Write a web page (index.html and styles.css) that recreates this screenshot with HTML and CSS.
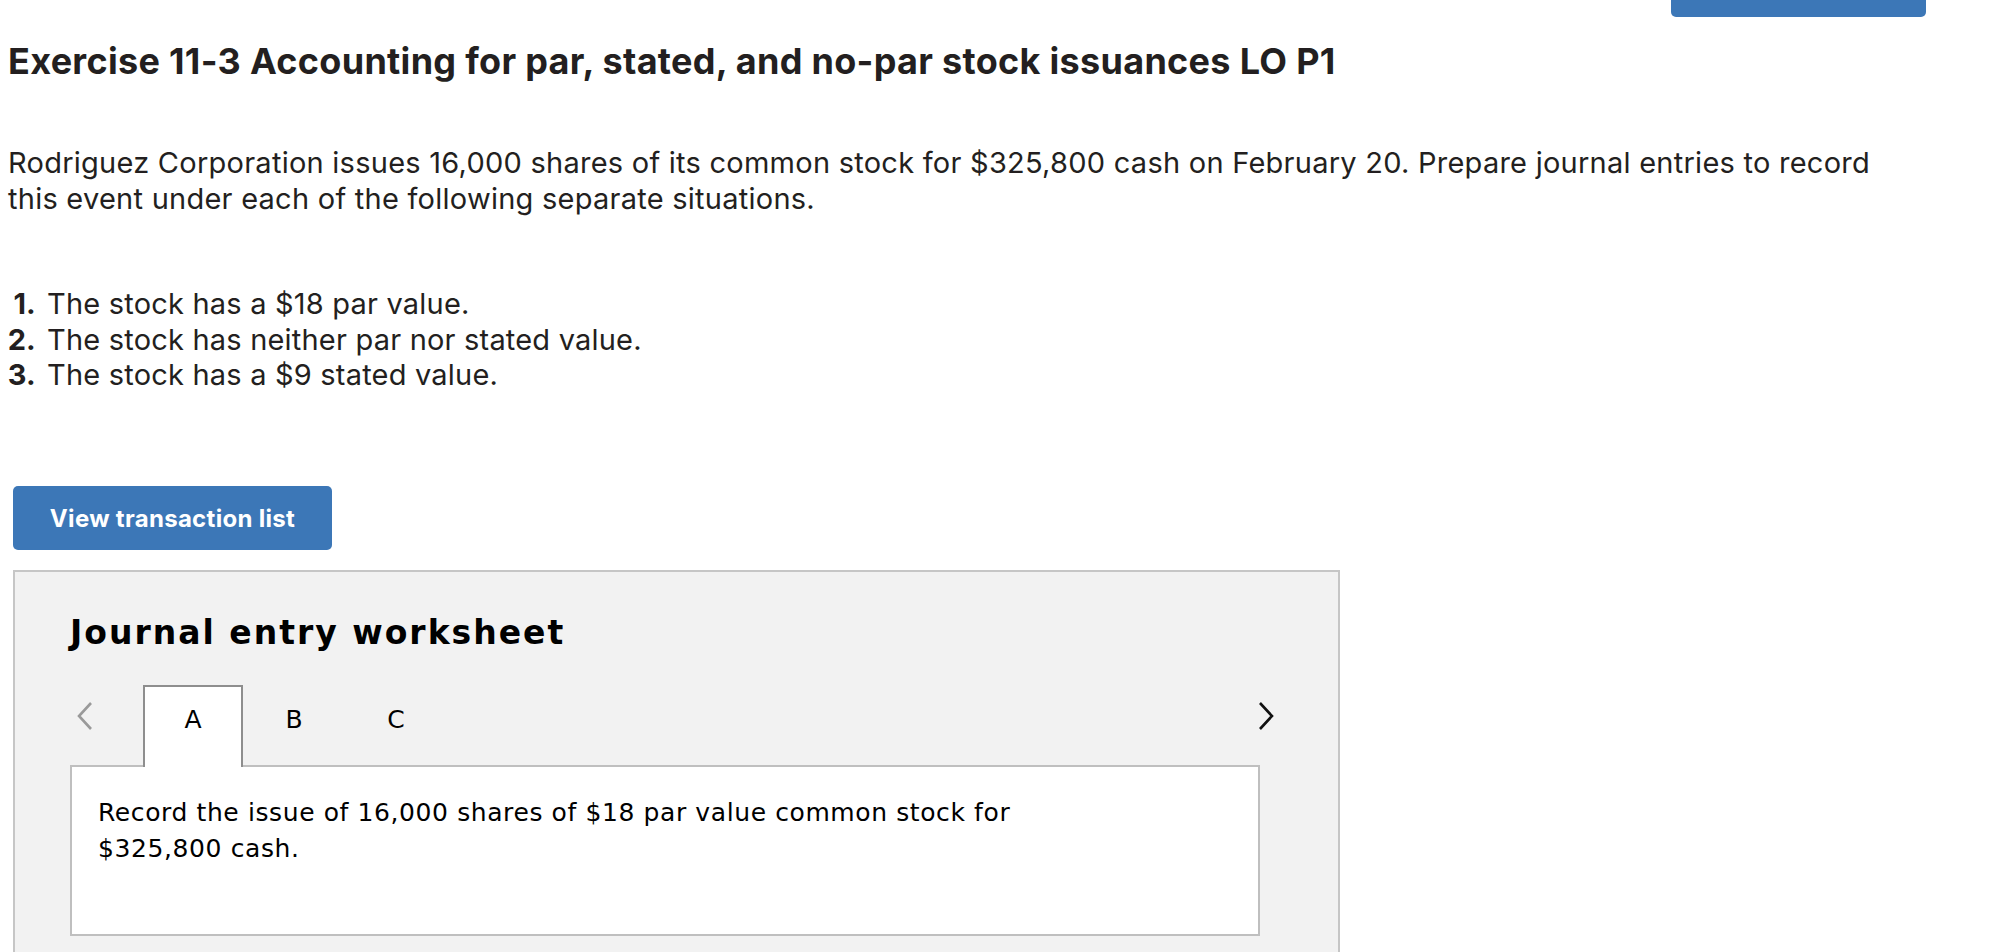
FILE: index.html
```html
<!DOCTYPE html>
<html lang="en">
<head>
<meta charset="utf-8">
<title>Exercise 11-3</title>
<link rel="stylesheet" href="styles.css">
</head>
<body>
<div class="page">
  <div class="topbar">
    <button class="btn btn-top">Check my work</button>
  </div>
  <h1 class="title">Exercise 11-3 Accounting for par, stated, and no-par stock issuances LO P1</h1>
  <p class="intro">Rodriguez Corporation issues 16,000 shares of its common stock for $325,800 cash on February 20. Prepare journal entries to record this event under each of the following separate situations.</p>
  <ol class="situations">
    <li><span class="num">1.</span><span>The stock has a $18 par value.</span></li>
    <li><span class="num">2.</span><span>The stock has neither par nor stated value.</span></li>
    <li><span class="num">3.</span><span>The stock has a $9 stated value.</span></li>
  </ol>
  <button class="btn btn-view">View transaction list</button>
  <section class="panel">
    <h2 class="ws-title">Journal entry worksheet</h2>
    <div class="tabrow">
      <div class="nav nav-prev">
        <svg width="18" height="32" viewBox="0 0 18 32"><polyline points="15,3 3,16 15,29" fill="none" stroke="#9a9a9a" stroke-width="2.6"/></svg>
      </div>
      <div class="tab active">A</div>
      <div class="tab">B</div>
      <div class="tab">C</div>
      <div class="spacer"></div>
      <div class="nav nav-next">
        <svg width="18" height="32" viewBox="0 0 18 32"><polyline points="3,3 15,16 3,29" fill="none" stroke="#111" stroke-width="2.6"/></svg>
      </div>
    </div>
    <div class="entry">
      <p>Record the issue of 16,000 shares of $18 par value common stock for<br>$325,800 cash.</p>
    </div>
  </section>
</div>
</body>
</html>
```

FILE: styles.css
```css
html, body {
  margin: 0;
  padding: 0;
  background: #fff;
}
.page {
  padding: 0 74px 0 8px;
  font-family: "Inter", "Lato", "Liberation Sans", sans-serif;
  color: #231f20;
}
.topbar {
  display: flex;
  justify-content: flex-end;
  height: 17px;
}
.btn {
  border: none;
  border-radius: 5px;
  background: #3c77b7;
  color: #fff;
  font-family: "Inter", "Lato", "Liberation Sans", sans-serif;
  font-weight: 700;
  font-size: 24px;
  letter-spacing: 0.3px;
  cursor: pointer;
}
.btn-top {
  width: 255px;
  height: 64px;
  margin-top: -47px;
  padding: 0;
}
.title {
  margin: 22px 0 0;
  font-size: 36px;
  line-height: 44px;
  font-weight: 700;
  letter-spacing: 0.3px;
}
.intro {
  margin: 62px 0 0;
  font-size: 29px;
  line-height: 36px;
  letter-spacing: 0.25px;
}
.situations {
  list-style: none;
  margin: 69px 0 0;
  padding: 0;
  font-size: 29px;
  line-height: 35.7px;
  letter-spacing: 0.2px;
}
.situations li {
  display: flex;
}
.situations .num {
  width: 36px;
  flex: none;
  margin-left: -8px;
  margin-right: 11px;
  text-align: right;
  font-weight: 700;
}
.btn-view {
  display: block;
  margin: 93px 0 0 5px;
  width: 319px;
  height: 64px;
  padding: 0;
}
.panel {
  margin: 20px 0 0 5px;
  width: 1327px;
  border: 2px solid #c6c6c6;
  background: #f2f2f2;
  padding: 41px 0 60px 55px;
  box-sizing: border-box;
  font-family: "DejaVu Sans", Verdana, sans-serif;
  color: #000;
}
.ws-title {
  margin: 0;
  font-size: 33px;
  line-height: 40px;
  font-weight: 700;
  letter-spacing: 2px;
}
.tabrow {
  display: flex;
  align-items: stretch;
  margin-top: 32px;
  width: 1205px;
  height: 82px;
  margin-bottom: -2px;
  position: relative;
  z-index: 1;
}
.nav {
  display: flex;
  align-items: center;
}
.nav-prev {
  width: 73px;
  padding-left: 6px;
  box-sizing: border-box;
  padding-bottom: 20px;
}
.nav-next {
  padding-bottom: 20px;
  margin-left: -4px;
}
.tab {
  width: 102px;
  box-sizing: border-box;
  display: flex;
  justify-content: center;
  padding-top: 21px;
  font-size: 25px;
  line-height: 28px;
}
.tab.active {
  width: 100px;
  border: 2px solid #8e8e8e;
  border-bottom: none;
  background: #fff;
  padding-top: 19px;
}
.spacer {
  flex: 1;
}
.entry {
  width: 1190px;
  height: 171px;
  box-sizing: border-box;
  border: 2px solid #bfbfbf;
  background: #fff;
  padding: 28px 26px;
}
.entry p {
  margin: 0;
  font-size: 25px;
  line-height: 36px;
  letter-spacing: 0.6px;
}
```
